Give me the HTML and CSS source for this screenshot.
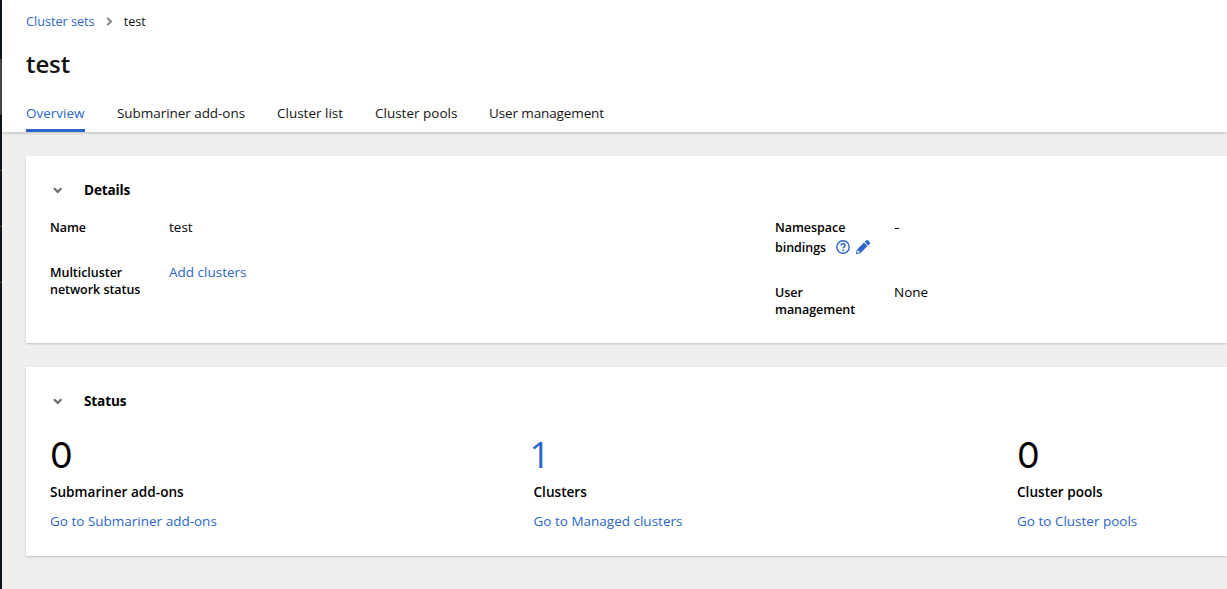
FILE: index.html
```
<!DOCTYPE html>
<html lang="en">
<head>
<meta charset="utf-8">
<title>test - Cluster sets</title>
<link rel="stylesheet" href="styles.css">
</head>
<body>
<div class="app">
  <aside class="rail"><div class="rail-active"></div><div class="rail-item"></div><div class="rail-item"></div><div class="rail-item"></div></aside>
  <main class="page">
    <header class="page-header">
      <nav class="breadcrumb">
        <a href="#">Cluster sets</a>
        <svg class="crumb-arrow" width="7" height="9" viewBox="0 0 7 9"><path d="M1.2 0.9 5 4.5 1.2 8.1" fill="none" stroke="#7b7e82" stroke-width="1.9"/></svg>
        <span>test</span>
      </nav>
      <h1>test</h1>
      <nav class="tabs">
        <a class="tab tab-current" href="#">Overview</a>
        <a class="tab tab-submariner" href="#">Submariner add-ons</a>
        <a class="tab tab-list" href="#">Cluster list</a>
        <a class="tab tab-pools" href="#">Cluster pools</a>
        <a class="tab tab-users" href="#">User management</a>
      </nav>
    </header>
    <div class="content">
      <section class="card details">
        <div class="card-header">
          <svg class="chevron" width="10" height="7" viewBox="0 0 10 7"><path d="M1 1.2 4.7 4.9 8.4 1.2" fill="none" stroke="#6a6e73" stroke-width="2.2"/></svg>
          <h2>Details</h2>
        </div>
        <div class="columns">
          <dl>
            <div class="row"><dt>Name</dt><dd>test</dd></div>
            <div class="row"><dt>Multicluster<br>network status</dt><dd><a href="#">Add clusters</a></dd></div>
          </dl>
          <dl>
            <div class="row bindings">
              <dt>Namespace<br><span class="term-line">bindings
                <svg class="help" width="14" height="14" viewBox="0 0 14 14"><circle cx="7" cy="7" r="6.2" fill="none" stroke="#2b66c8" stroke-width="1.4"/><path d="M5 5.6C5.1 4.4 5.9 3.8 7 3.8c1.2 0 2 .7 2 1.7C9 6.8 7.2 6.9 7.2 8.3" fill="none" stroke="#2b66c8" stroke-width="1.5"/><circle cx="7.1" cy="10.2" r=".95" fill="#2b66c8"/></svg>
                <svg class="pencil" width="14" height="14" viewBox="0 0 512 512"><path fill="#2b66c8" d="M497.900 142.100l-46.100 46.100c-4.700 4.700-12.300 4.700-17 0l-111-111c-4.700-4.700-4.700-12.300 0-17l46.100-46.100c18.700-18.700 49.100-18.700 67.900 0l60.100 60.100c18.800 18.700 18.800 49.100 0 67.900zM284.200 99.800L21.600 362.400.4 483.900c-2.900 16.400 11.400 30.600 27.800 27.800l121.500-21.300 262.600-262.600c4.700-4.700 4.700-12.300 0-17l-111-111c-4.800-4.700-12.400-4.700-17.100 0zM88 424h48v36.300l-64.500 11.300-31.100-31.100L51.700 376H88v48z"/></svg>
              </span></dt>
              <dd><span class="empty">-</span></dd>
            </div>
            <div class="row"><dt>User<br>management</dt><dd>None</dd></div>
          </dl>
        </div>
      </section>
      <section class="card status">
        <div class="card-header">
          <svg class="chevron" width="10" height="7" viewBox="0 0 10 7"><path d="M1 1.2 4.7 4.9 8.4 1.2" fill="none" stroke="#6a6e73" stroke-width="2.2"/></svg>
          <h2>Status</h2>
        </div>
        <div class="stats">
          <div class="stat"><div class="count">0</div><h3>Submariner add-ons</h3><a href="#">Go to Submariner add-ons</a></div>
          <div class="stat"><div class="count count-link"><a href="#">1</a></div><h3>Clusters</h3><a href="#">Go to Managed clusters</a></div>
          <div class="stat"><div class="count">0</div><h3>Cluster pools</h3><a href="#">Go to Cluster pools</a></div>
        </div>
      </section>
    </div>
  </main>
</div>
</body>
</html>
```
FILE: styles.css
```
* { box-sizing: border-box; }
body {
  margin: 0;
  overflow: hidden;
  background: #efefef;
  color: #151515;
  font: 13.5px/20px "Open Sans", "Noto Sans", sans-serif;
}
a { color: #2b66c8; text-decoration: none; }
h1, h2, h3, dl, dd { margin: 0; }
svg { display: block; flex: none; }

.app { display: flex; height: 589px; }
.rail { flex: none; width: 2px; padding-top: 59px; background: #0f161c; }
.rail-active { height: 56px; background: #4a474e; border-bottom: 1px solid #3c3f42; }
.rail-item { height: 56px; border-bottom: 1px solid #3c3f42; }
.page { flex: 1; min-width: 0; }

.page-header {
  position: relative;
  height: 132px;
  padding: 11px 24px 0;
  background: #fff;
  box-shadow: 0 1px 3px rgba(3, 3, 3, .22);
}
.breadcrumb { display: flex; align-items: center; height: 20px; font-size: 12.7px; letter-spacing: -.02px; }
.crumb-arrow { margin: 1px 11px 0 11px; }
h1 { margin-top: 17px; font-size: 24px; line-height: 32px; font-weight: 550; letter-spacing: -.1px; }
.tabs { display: flex; gap: 32px; margin-top: 15px; }
.tab { height: 37px; padding-top: 8px; color: #151515; white-space: nowrap; }
.tab-current { width: 59px; color: #2b66c8; border-bottom: 3px solid #2b66c8; }
.tab-submariner { width: 128px; letter-spacing: -.05px; }
.tab-list { width: 66px; }
.tab-pools { width: 82px; }
.tab-users { width: 115px; letter-spacing: -.12px; }

.content { display: flex; flex-direction: column; gap: 24px; padding: 24px 0 24px 24px; }
.card { padding: 24px 0 24px 24px; background: #fff; box-shadow: 0 1px 2px rgba(3, 3, 3, .2); color: #000; }
.details { height: 187px; }
.status { height: 189px; }
.card-header { display: flex; align-items: center; height: 20px; }
.chevron { margin: 0 21px 0 3px; }
h2 { font-size: 13.6px; line-height: 20px; font-weight: 700; letter-spacing: -.15px; }

.columns { display: grid; grid-template-columns: 725px 1fr; margin-top: 19px; }
.row { display: grid; grid-template-columns: 119px 1fr; min-height: 17px; margin-bottom: 28px; line-height: 17px; }
.row dt { font-size: 12.5px; font-weight: 600; letter-spacing: -.04px; white-space: nowrap; }
.term-line { display: flex; align-items: center; height: 23px; }
.bindings { margin-bottom: 25px; }
.help { margin: 0 6px 1px 10px; }
.pencil { margin-bottom: 1px; }
.empty { display: inline-block; transform: scaleX(1.3); transform-origin: left; }

.stats { display: grid; grid-template-columns: 483.5px 483.5px 1fr; margin-top: 15px; }
.stat { display: flex; flex-direction: column; }
.count { height: 56px; font: 400 36px/58px Inter, sans-serif; }
.count-link { margin-left: -4px; padding-right: 4px; font-family: "Open Sans", sans-serif; }
h3 { margin-bottom: 9px; font-size: 13.6px; line-height: 20px; font-weight: 600; }
```
